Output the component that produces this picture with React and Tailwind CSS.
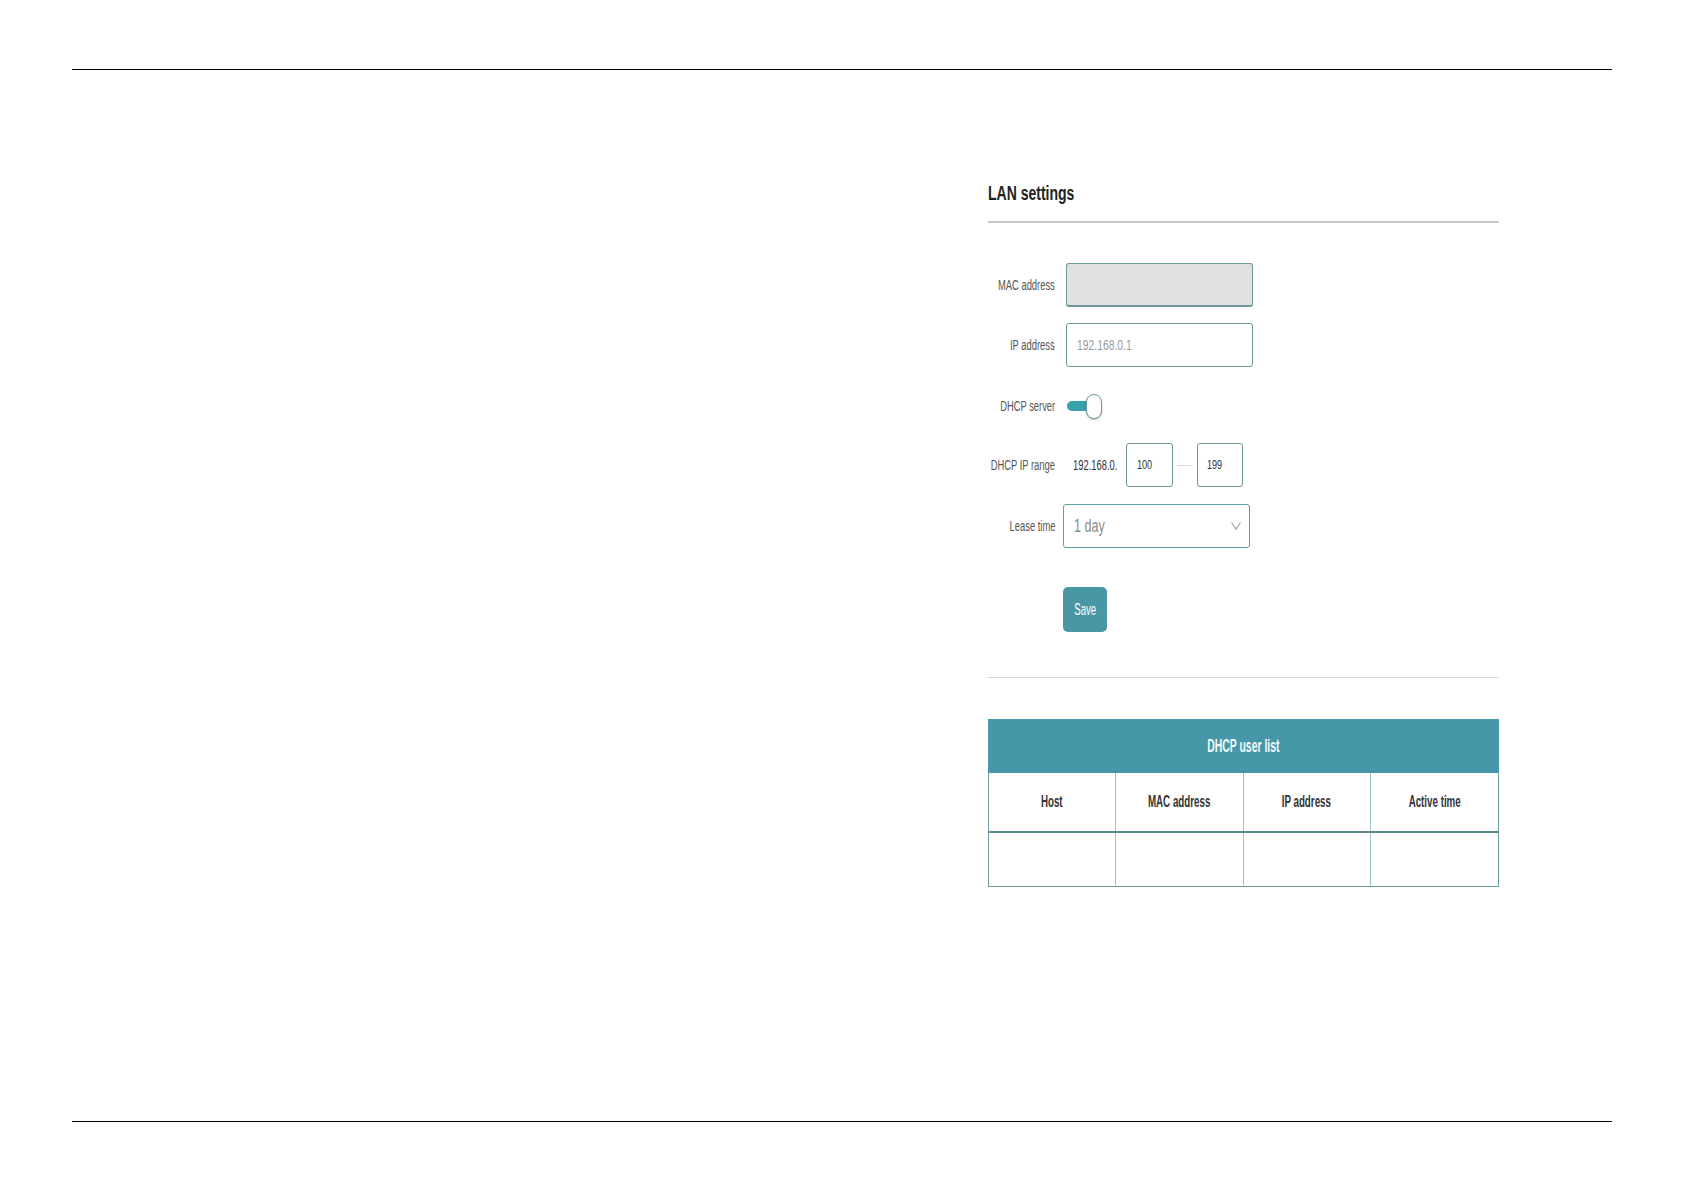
import { useState } from 'react'

// narrow text: the page is squeezed horizontally, so text is scaled on x
function Label({ children }) {
  return (
    <div className="w-[67px] shrink-0 flex justify-end">
      <span className="inline-block whitespace-nowrap text-[14px] text-[#555] scale-x-[0.67] origin-right">
        {children}
      </span>
    </div>
  )
}

function Row({ label, children, className = '' }) {
  return (
    <div className={`flex items-center ${className}`}>
      <Label>{label}</Label>
      <div className="flex items-center pl-[9px]">{children}</div>
    </div>
  )
}

export default function App() {
  const [dhcp, setDhcp] = useState(true)

  return (
    <div className="w-[1684px] h-[1191px] bg-white flex flex-col px-[72px] pt-[69px] font-['Liberation_Sans',Arial,sans-serif]">
      <div className="h-px bg-black shrink-0" />

      <div className="flex-1 pl-[916px] pt-[111px]">
        <div className="w-[511px] flex flex-col">

          {/* ── Title ── */}
          <h1 className="h-6 leading-6 text-[20px] font-bold text-[#222]">
            <span className="inline-block whitespace-nowrap scale-x-[0.7] origin-left">LAN settings</span>
          </h1>
          <div className="mt-[16px] h-[2px] bg-[#c8c8c8]" />

          {/* ── Form ── */}
          <Row label="MAC address" className="mt-[40px]">
            <div className="ml-[2px] w-[187px] h-[44px] rounded-[3px] bg-[#e1e1e1] border border-[#6c9898] border-b-2" />
          </Row>

          <Row label="IP address" className="mt-[16px]">
            <div className="ml-[2px] w-[187px] h-[44px] rounded-[3px] bg-white border border-[#6c9898] flex items-center pl-[10px]">
              <span className="inline-block whitespace-nowrap text-[14px] text-[#9a9a9a] scale-x-[0.74] origin-left">192.168.0.1</span>
            </div>
          </Row>

          <Row label="DHCP server" className="mt-[26px] h-[26px]">
            <button onClick={() => setDhcp(d => !d)} className="ml-[3px] flex items-center">
              <span className={`w-[23px] h-[10px] rounded-l-full ${dhcp ? 'bg-[#37a0ad]' : 'bg-[#cfcfcf]'}`} />
              <span className="-ml-[4px] w-[16px] h-[25px] rounded-full bg-white border border-[#6d9a9f] shadow-[0_1px_2px_rgba(0,0,0,0.25)]" />
            </button>
          </Row>

          <Row label="DHCP IP range" className="mt-[24px]">
            <div className="w-[62px] pl-[9px] shrink-0">
              <span className="inline-block whitespace-nowrap text-[14px] text-[#333] scale-x-[0.67] origin-left">192.168.0.</span>
            </div>
            <div className="w-[47px] h-[44px] rounded-[3px] border border-[#6c9898] flex items-center pl-[10px]">
              <span className="inline-block whitespace-nowrap text-[13px] text-[#333] scale-x-[0.7] origin-left">100</span>
            </div>
            <div className="mx-[4px] w-[16px] h-px bg-[#dcdcdc]" />
            <div className="w-[46px] h-[44px] rounded-[3px] border border-[#6c9898] flex items-center pl-[9px]">
              <span className="inline-block whitespace-nowrap text-[13px] text-[#333] scale-x-[0.7] origin-left">199</span>
            </div>
          </Row>

          <Row label="Lease time" className="mt-[17px]">
            <div className="-ml-[1px] w-[187px] h-[44px] rounded-[3px] border border-[#5f9ea3] flex items-center justify-between pl-[10px] pr-[8px]">
              <span className="inline-block whitespace-nowrap text-[19px] text-[#8a8a8a] scale-x-[0.66] origin-left">1 day</span>
              <svg width="10" height="8" viewBox="0 0 10 8" fill="none" stroke="#a8a8a8" strokeWidth="1.2">
                <path d="M0.5 0.5L5 7.2L9.5 0.5" />
              </svg>
            </div>
          </Row>

          <div className="mt-[39px] pl-[75px]">
            <button className="w-[44px] h-[45px] rounded-[5px] bg-[#4997a5] flex items-center justify-center">
              <span className="inline-block whitespace-nowrap text-[16px] text-white scale-x-[0.6] origin-center">Save</span>
            </button>
          </div>

          <div className="mt-[45px] h-px bg-[#d5d5d5]" />

          {/* ── DHCP user list ── */}
          <div className="mt-[41px] flex flex-col">
            <div className="h-[54px] bg-[#4697a8] flex items-center justify-center">
              <span className="inline-block whitespace-nowrap text-[18px] font-bold text-[#f2fafa] scale-x-[0.58] origin-center">DHCP user list</span>
            </div>
            <div className="grid grid-cols-4 h-[60px] border-x border-[#6f9c9c] border-b-2 border-b-[#5b8b8b] divide-x divide-[#9cc3c3]">
              {['Host', 'MAC address', 'IP address', 'Active time'].map(h => (
                <div key={h} className="flex items-center justify-center">
                  <span className="inline-block whitespace-nowrap text-[16px] font-bold text-[#333] scale-x-[0.61] origin-center">{h}</span>
                </div>
              ))}
            </div>
            <div className="grid grid-cols-4 h-[54px] border-x border-b border-[#6f9c9c] divide-x divide-[#9cc3c3]">
              <div />
              <div />
              <div />
              <div />
            </div>
          </div>
        </div>
      </div>

      <div className="h-px bg-black shrink-0 mb-[69px]" />
    </div>
  )
}
